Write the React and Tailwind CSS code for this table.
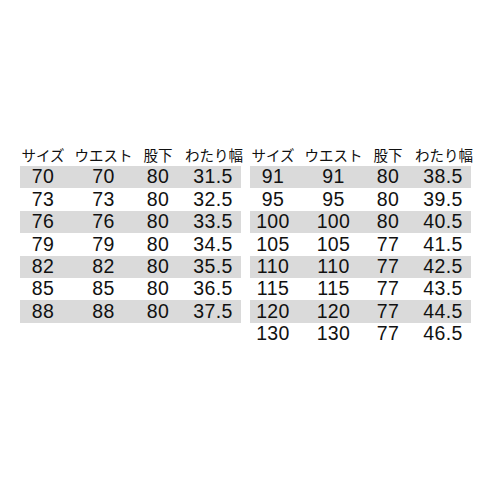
import React from "react";

const left = [
  ["70", "70", "80", "31.5"],
  ["73", "73", "80", "32.5"],
  ["76", "76", "80", "33.5"],
  ["79", "79", "80", "34.5"],
  ["82", "82", "80", "35.5"],
  ["85", "85", "80", "36.5"],
  ["88", "88", "80", "37.5"],
];

const right = [
  ["91", "91", "80", "38.5"],
  ["95", "95", "80", "39.5"],
  ["100", "100", "80", "40.5"],
  ["105", "105", "77", "41.5"],
  ["110", "110", "77", "42.5"],
  ["115", "115", "77", "43.5"],
  ["120", "120", "77", "44.5"],
  ["130", "130", "77", "46.5"],
];

const cols = "grid grid-cols-[46px_75px_34px_66px]";

const SizeTable = ({ rows }) => {
  return (
    <div className="w-[221px]">
      <div
        className={`${cols} h-[21px] items-center text-[14.5px] leading-none text-[#111]`}
        style={{ fontFamily: '"Noto Sans CJK JP", sans-serif' }}
      >
        <div className="text-center whitespace-nowrap">サイズ</div>
        <div className="text-center whitespace-nowrap">ウエスト</div>
        <div className="text-center whitespace-nowrap">股下</div>
        <div className="text-center whitespace-nowrap pl-[10px]">わたり幅</div>
      </div>
      {rows.map((r, i) => (
        <div
          key={r[0]}
          className={`${cols} h-[22.4px] items-center text-[19.5px] tracking-[0.4px] leading-none text-[#111] ${
            i % 2 === 0 ? "bg-[#dadada]" : "bg-white"
          }`}
          style={{ fontFamily: '"Liberation Sans", Arial, sans-serif' }}
        >
          <div className="text-center">{r[0]}</div>
          <div className="text-center">{r[1]}</div>
          <div className="text-center">{r[2]}</div>
          <div className="text-center pl-[10px]">{r[3]}</div>
        </div>
      ))}
    </div>
  );
};

export default function App() {
  return (
    <div className="w-[490px] h-[490px] bg-white flex items-start gap-[9px] pl-[20px] pt-[145px]">
      <SizeTable rows={left} />
      <SizeTable rows={right} />
    </div>
  );
}
